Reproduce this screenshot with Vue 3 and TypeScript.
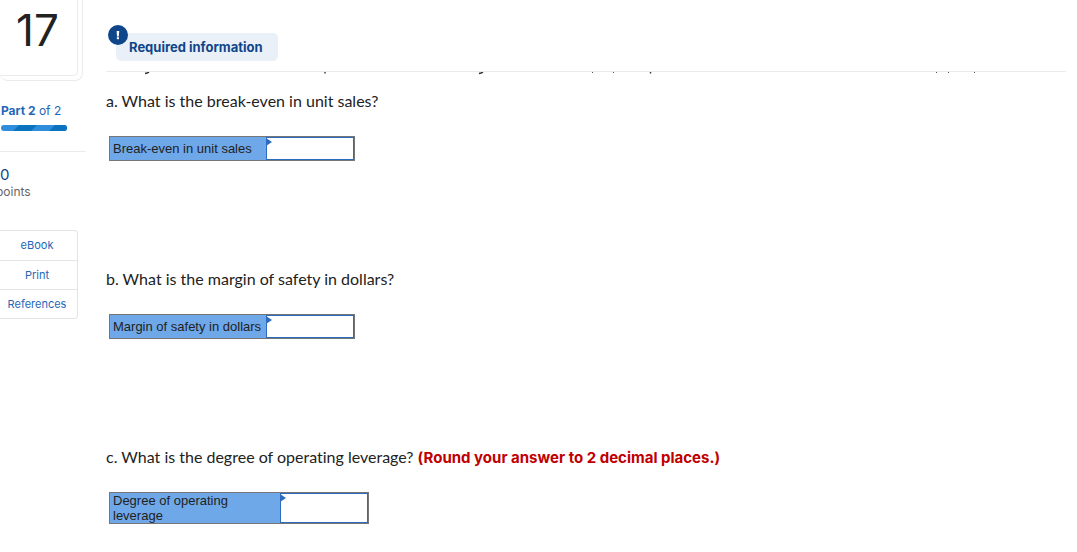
<script setup lang="ts">
import { ref } from 'vue'

interface Question {
  id: string
  text: string
  note?: string
  label: string
  wide?: boolean
}

const questions: Question[] = [
  { id: 'a', text: 'a. What is the break-even in unit sales?', label: 'Break-even in unit sales' },
  { id: 'b', text: 'b. What is the margin of safety in dollars?', label: 'Margin of safety in dollars' },
  {
    id: 'c',
    text: 'c. What is the degree of operating leverage?',
    note: '(Round your answer to 2 decimal places.)',
    label: 'Degree of operating leverage',
    wide: true,
  },
]
const tools = ['eBook', 'Print', 'References']
const answers = ref<Record<string, string>>({ a: '', b: '', c: '' })
</script>

<template>
  <div class="page">
    <aside class="side">
      <div class="stack"><div class="number">17</div></div>
      <p class="part"><b>Part 2</b> of 2</p>
      <svg class="progress" viewBox="0 0 66 6" role="img" aria-label="Part 2 of 2">
        <clipPath id="pill"><rect width="66" height="6" rx="3" /></clipPath>
        <g clip-path="url(#pill)">
          <rect width="66" height="6" fill="#2f8edb" />
          <path d="M18 0H36L30 6H12ZM54 0H66V6H48Z" fill="#0b72c0" />
        </g>
      </svg>
      <div class="score">
        <span class="value">10</span>
        <span class="unit">points</span>
      </div>
      <nav class="tools">
        <a v-for="t in tools" :key="t" href="#">{{ t }}</a>
      </nav>
    </aside>

    <main class="content">
      <header class="head">
        <div class="required">
          <span class="alert">
            <svg viewBox="0 0 20 20" aria-hidden="true">
              <circle cx="10" cy="10" r="10" fill="#0f4589" />
              <path d="M8.6 6H11.2L10.8 11.4H9Z" fill="#fff" />
              <rect x="8.8" y="12.2" width="2.2" height="2" fill="#fff" />
            </svg>
          </span>
          Required information
        </div>
      </header>
      <!-- descenders of the line scrolled under the header -->
      <svg class="scrolled" width="960" height="3" aria-hidden="true">
        <path
          d="M39 1.5L41 1L43 0M373 1.5L375 1L377 0M219 0V1.5M544.5 0V1.5"
          fill="none" stroke="#333" stroke-width="1.4"
        />
        <path d="M486 0h1v1h-1ZM507 0h1v1h-1ZM830 0h1v1h-1ZM842 0h1v1h-1ZM868 0h1v1h-1Z" fill="#555" />
      </svg>

      <section v-for="q in questions" :key="q.id" class="question">
        <p class="prompt">{{ q.text }} <strong v-if="q.note">{{ q.note }}</strong></p>
        <table class="answer" :class="{ wide: q.wide }">
          <tbody>
            <tr>
              <th scope="row"><label :for="'answer-' + q.id">{{ q.label }}</label></th>
              <td><input :id="'answer-' + q.id" v-model="answers[q.id]" type="text" /></td>
            </tr>
          </tbody>
        </table>
      </section>
    </main>
  </div>
</template>

<style>
body {
  margin: 0;
  background: #fff;
}
</style>

<style scoped>
.page {
  display: flex;
  gap: 20px;
  padding-right: 11px;
  font-family: Inter, "Liberation Sans", sans-serif;
  color: #222;
}
p {
  margin: 0;
}
.side {
  flex: none;
  width: 86px;
}
.stack {
  box-sizing: border-box;
  width: 83px;
  height: 81px;
  padding-right: 4px;
  border: solid #ebebeb;
  border-width: 0 1px 1px 0;
  border-radius: 0 0 8px 8px;
}
.number {
  box-sizing: border-box;
  height: 76px;
  padding-right: 2px;
  border: solid #ebebeb;
  border-width: 0 1px 1px 0;
  border-radius: 0 0 5px 0;
  font-size: 44px;
  line-height: 60px;
  text-align: center;
}
.part {
  margin: 20px 0 0 1px;
  font-size: 12px;
  line-height: 20px;
  color: #1f67b8;
}
.progress {
  display: block;
  width: 66px;
  height: 6px;
  margin: 4px 0 0 1px;
}
.score {
  display: flex;
  flex-direction: column;
  margin-top: 20px;
  padding-top: 14px;
  border-top: 1px solid #ebebeb;
}
.value {
  margin-left: -6px;
  font-size: 15px;
  line-height: 18px;
  color: #0f4589;
}
.unit {
  margin-left: -4px;
  font-size: 12px;
  line-height: 16px;
  color: #666;
}
.tools {
  box-sizing: border-box;
  width: 78px;
  margin-top: 30px;
  border: solid #e4e4e4;
  border-width: 1px 1px 1px 0;
  border-radius: 0 4px 4px 0;
}
.tools a {
  display: block;
  padding-right: 3px;
  font-size: 11px;
  line-height: 29px;
  text-align: center;
  text-decoration: none;
  color: #1f67b8;
}
.tools a + a {
  border-top: 1px solid #e4e4e4;
  line-height: 28px;
}
.content {
  flex: 1;
  min-width: 0;
}
.head {
  display: flex;
  padding: 33px 0 10px 10px;
  border-bottom: 1px solid #ebebeb;
}
.required {
  position: relative;
  padding: 0 15px 0 13px;
  border-radius: 5px;
  background: #e9f0f8;
  color: #0f4589;
  font-size: 13px;
  font-weight: 700;
  line-height: 28px;
}
.alert {
  position: absolute;
  top: -8px;
  left: -8px;
  width: 20px;
  height: 20px;
}
.alert svg {
  display: block;
}
.scrolled {
  display: block;
}
.question {
  padding-top: 16px;
}
.question:not(:last-child) {
  padding-bottom: 92px;
}
.prompt {
  font-family: Lato, "Liberation Sans", sans-serif;
  font-size: 16px;
  font-variant-ligatures: none;
  line-height: 20px;
}
.prompt strong {
  font-family: Inter, "Liberation Sans", sans-serif;
  font-size: 15px;
  line-height: 1;
  color: #c00000;
}
.answer {
  width: 246px;
  margin: 25px 0 0 3px;
  border: 1px solid #767676;
  border-collapse: separate;
  border-spacing: 0;
  table-layout: fixed;
}
.answer.wide {
  width: 260px;
}
.answer th {
  padding: 0 3px;
  background: #6fa8e8;
  font: 13px/15px "Liberation Sans", Arial, sans-serif;
  text-align: left;
}
.answer td {
  position: relative;
  width: 88px;
  height: 23px;
  padding: 0;
}
.answer.wide td {
  height: 30px;
}
.answer td::before {
  content: "";
  position: absolute;
  top: 1px;
  left: 0;
  border: solid transparent;
  border-width: 4px 0 4px 6px;
  border-left-color: #2b6cc0;
}
.answer input {
  display: block;
  box-sizing: border-box;
  width: 100%;
  height: 23px;
  border: 1px solid #2b6cc0;
  padding: 0 4px;
  background: #fff;
  font: 13px "Liberation Sans", Arial, sans-serif;
  outline: none;
}
.answer.wide input {
  height: 30px;
}
</style>
